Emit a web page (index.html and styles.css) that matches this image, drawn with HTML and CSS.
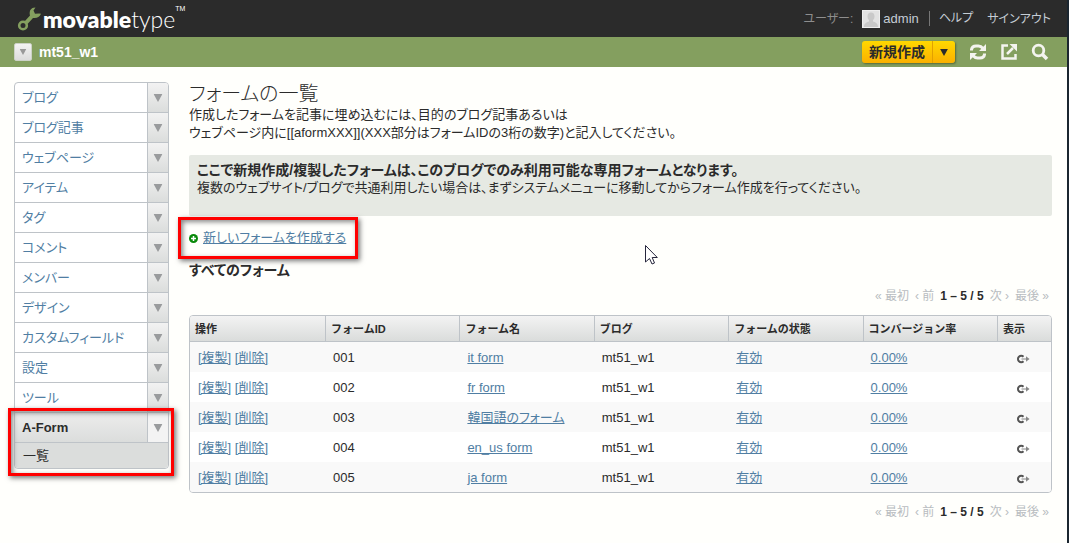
FILE: index.html
```html
<!DOCTYPE html>
<html lang="ja">
<head>
<meta charset="utf-8">
<title>フォームの一覧 | Movable Type</title>
<link rel="stylesheet" href="styles.css">
</head>
<body>
<svg class="defs" width="0" height="0" aria-hidden="true">
  <symbol id="down" viewBox="0 0 10 9"><path d="M0 0H10L5 9Z"/></symbol>
  <symbol id="view" viewBox="0 0 14 10"><path d="M7.500 2.800A3.200 3.200 0 1 0 7.500 7.200" fill="none" stroke="#555" stroke-width="2"/><path d="M5.500 5H10" fill="none" stroke="#888" stroke-width="1.200"/><path d="M10 2.200L13.500 5L10 7.800Z" fill="#888"/></symbol>
</svg>
<header class="brandbar">
  <a class="logo" href="#">
    <svg class="wrench" viewBox="0 0 24 24" aria-hidden="true"><circle cx="6" cy="18.500" r="3.800" fill="none" stroke="#849f5f" stroke-width="2.600"/><path d="M7.500 14.500L13 8.500C12 4.500 13.500 1.500 16.500 .8L18.500 .5L16.500 3.500L18 6.800L22 6.500L24 6.800C22.500 10.500 19.500 11.500 16 11L10.500 17Z" fill="#849f5f"/></svg>
    <span class="wordmark"><b>movable</b>type</span><sup>TM</sup>
  </a>
  <nav class="account">
    <span class="muted">ユーザー:</span>
    <a class="user" href="#"><svg class="avatar" viewBox="0 0 18 18" aria-hidden="true"><path d="M0 0H18V18H0Z" fill="#eee"/><path d="M1 1H17V17H1Z" fill="#e2e2e2"/><ellipse cx="9" cy="6.500" rx="3.500" ry="4" fill="#c9c9c9"/><path d="M2 17C2 13 5 12 7 11.500V9H11V11.500C13 12 16 13 16 17Z" fill="#c9c9c9"/></svg>admin</a>
    <a class="help" href="#">ヘルプ</a>
    <a class="signout" href="#">サインアウト</a>
  </nav>
</header>
<div class="blogbar">
  <button class="switch" type="button" aria-label="ブログの切り替え"><svg viewBox="0 0 10 9"><use href="#down"/></svg></button>
  <a class="blogname" href="#">mt51_w1</a>
  <div class="create"><button type="button">新規作成</button><button class="more" type="button" aria-label="作成メニュー"><svg viewBox="0 0 10 9"><use href="#down"/></svg></button></div>
  <a class="tool" href="#" aria-label="再構築"><svg viewBox="0 0 18 18"><path d="M2.500 7.500V6.500Q3 3 7 3H9.500Q12 3 14 5.500M15.500 10.500V11.500Q15 15 11 15H8.500Q6 15 4 12.500" fill="none" stroke="#f4f4ef" stroke-width="3"/><path d="M17 1V8H10ZM1 17V10H8Z" fill="#f4f4ef"/></svg></a>
  <a class="tool" href="#" aria-label="サイトの表示"><svg viewBox="0 0 18 18"><path d="M8 2.500H2.500V15.500H15.500V11M7 11L13 5" fill="none" stroke="#f4f4ef" stroke-width="2.500"/><path d="M9.500 1H17V8.500Z" fill="#f4f4ef"/></svg></a>
  <a class="tool" href="#" aria-label="検索"><svg viewBox="0 0 18 18"><circle cx="7.500" cy="7.500" r="5.300" fill="none" stroke="#f4f4ef" stroke-width="2.800"/><path d="M11 11L16 16" stroke="#f4f4ef" stroke-width="3.500"/></svg></a>
</div>
<div class="layout">
  <nav class="menu">
    <div class="item"><a href="#">ブログ</a><button type="button" aria-label="ブログを開く"><svg viewBox="0 0 10 9"><use href="#down"/></svg></button></div>
    <div class="item"><a href="#">ブログ記事</a><button type="button" aria-label="ブログ記事を開く"><svg viewBox="0 0 10 9"><use href="#down"/></svg></button></div>
    <div class="item"><a href="#">ウェブページ</a><button type="button" aria-label="ウェブページを開く"><svg viewBox="0 0 10 9"><use href="#down"/></svg></button></div>
    <div class="item"><a href="#">アイテム</a><button type="button" aria-label="アイテムを開く"><svg viewBox="0 0 10 9"><use href="#down"/></svg></button></div>
    <div class="item"><a href="#">タグ</a><button type="button" aria-label="タグを開く"><svg viewBox="0 0 10 9"><use href="#down"/></svg></button></div>
    <div class="item"><a href="#">コメント</a><button type="button" aria-label="コメントを開く"><svg viewBox="0 0 10 9"><use href="#down"/></svg></button></div>
    <div class="item"><a href="#">メンバー</a><button type="button" aria-label="メンバーを開く"><svg viewBox="0 0 10 9"><use href="#down"/></svg></button></div>
    <div class="item"><a href="#">デザイン</a><button type="button" aria-label="デザインを開く"><svg viewBox="0 0 10 9"><use href="#down"/></svg></button></div>
    <div class="item"><a href="#">カスタムフィールド</a><button type="button" aria-label="カスタムフィールドを開く"><svg viewBox="0 0 10 9"><use href="#down"/></svg></button></div>
    <div class="item"><a href="#">設定</a><button type="button" aria-label="設定を開く"><svg viewBox="0 0 10 9"><use href="#down"/></svg></button></div>
    <div class="item"><a href="#">ツール</a><button type="button" aria-label="ツールを開く"><svg viewBox="0 0 10 9"><use href="#down"/></svg></button></div>
    <div class="group">
      <div class="item current"><a href="#">A-Form</a><button type="button" aria-label="A-Formを閉じる"><svg viewBox="0 0 10 9"><use href="#down"/></svg></button></div>
      <a class="sub" href="#">一覧</a>
      <span class="mark mark-menu"></span>
    </div>
  </nav>
  <main class="content">
    <h1>フォームの一覧</h1>
    <p class="lead">作成したフォームを記事に埋め込むには、目的のブログ記事あるいは<br>ウェブページ内に[[aformXXX]](XXX部分はフォームIDの3桁の数字)と記入してください。</p>
    <div class="notice"><strong>ここで新規作成/複製したフォームは、このブログでのみ利用可能な専用フォームとなります。</strong><p>複数のウェブサイト/ブログで共通利用したい場合は、まずシステムメニューに移動してからフォーム作成を行ってください。</p></div>
    <div class="new">
      <svg class="plus" viewBox="0 0 9 9" aria-hidden="true"><circle cx="4.500" cy="4.500" r="4.500" fill="#0a8a0a"/><path d="M4.500 2V7M2 4.500H7" stroke="#fff" stroke-width="1.500"/></svg>
      <a href="#">新しいフォームを作成する</a>
      <span class="mark mark-new"></span>
    </div>
    <h2>すべてのフォーム</h2>
    <div class="pager"><span>« 最初</span><span>‹ 前</span><b>1 – 5 / 5</b><span>次 ›</span><span>最後 »</span></div>
    <div class="frame">
      <table>
        <colgroup><col class="first"><col><col><col><col><col><col class="last"></colgroup>
        <thead><tr><th>操作</th><th>フォームID</th><th>フォーム名</th><th>ブログ</th><th>フォームの状態</th><th>コンバージョン率</th><th>表示</th></tr></thead>
        <tbody>
          <tr><td><a href="#">[複製]</a> <a href="#">[削除]</a></td><td>001</td><td><a href="#">it form</a></td><td>mt51_w1</td><td><a href="#">有効</a></td><td><a href="#">0.00%</a></td><td class="show"><a href="#" aria-label="表示"><svg viewBox="0 0 14 10"><use href="#view"/></svg></a></td></tr>
          <tr><td><a href="#">[複製]</a> <a href="#">[削除]</a></td><td>002</td><td><a href="#">fr form</a></td><td>mt51_w1</td><td><a href="#">有効</a></td><td><a href="#">0.00%</a></td><td class="show"><a href="#" aria-label="表示"><svg viewBox="0 0 14 10"><use href="#view"/></svg></a></td></tr>
          <tr><td><a href="#">[複製]</a> <a href="#">[削除]</a></td><td>003</td><td><a href="#">韓国語のフォーム</a></td><td>mt51_w1</td><td><a href="#">有効</a></td><td><a href="#">0.00%</a></td><td class="show"><a href="#" aria-label="表示"><svg viewBox="0 0 14 10"><use href="#view"/></svg></a></td></tr>
          <tr><td><a href="#">[複製]</a> <a href="#">[削除]</a></td><td>004</td><td><a href="#">en_us form</a></td><td>mt51_w1</td><td><a href="#">有効</a></td><td><a href="#">0.00%</a></td><td class="show"><a href="#" aria-label="表示"><svg viewBox="0 0 14 10"><use href="#view"/></svg></a></td></tr>
          <tr><td><a href="#">[複製]</a> <a href="#">[削除]</a></td><td>005</td><td><a href="#">ja form</a></td><td>mt51_w1</td><td><a href="#">有効</a></td><td><a href="#">0.00%</a></td><td class="show"><a href="#" aria-label="表示"><svg viewBox="0 0 14 10"><use href="#view"/></svg></a></td></tr>
        </tbody>
      </table>
    </div>
    <div class="pager pager-bottom"><span>« 最初</span><span>‹ 前</span><b>1 – 5 / 5</b><span>次 ›</span><span>最後 »</span></div>
  </main>
</div>
<svg class="pointer" viewBox="0 0 13 20" aria-hidden="true"><path d="M.5 .5V17L4.500 13.500L7 19L9.500 18L7.200 12.500H12.300Z" fill="#fff" stroke="#26263c"/></svg>
</body>
</html>
```
FILE: styles.css
```css
* { box-sizing: border-box; }
body {
  position: relative;
  margin: 0;
  min-height: 100vh;
  overflow: hidden;
  border-right: 2px solid #1b2630;
  background: #fffffc;
  color: #2b2b2b;
  font: 13px/18px "Liberation Sans", "Noto Sans CJK JP", sans-serif;
  font-feature-settings: "palt";
}
a { color: #507ea3; }
button { margin: 0; padding: 0; border: 0; font: inherit; color: inherit; cursor: pointer; }
svg { display: block; }
.defs { position: absolute; }

.brandbar {
  display: flex;
  justify-content: space-between;
  align-items: center;
  height: 37px;
  padding: 0 16px 0 17px;
  background: #2b2b2b;
}
.logo { display: flex; align-items: center; color: #fff; text-decoration: none; }
.wrench { width: 24px; height: 24px; }
.wordmark { margin-left: 2px; font: 300 23px/28px Lato, sans-serif; }
.wordmark b { font-weight: 800; }
.logo sup { align-self: flex-start; font: 7px/8px "Liberation Sans", sans-serif; }
.account { display: flex; align-items: center; font-size: 12px; }
.account a { color: #c5cdd5; text-decoration: none; }
.muted { margin-right: 9px; color: #8e8e8e; }
.account .user { display: flex; align-items: center; gap: 3px; font-size: 13px; }
.avatar { width: 18px; height: 18px; }
.help { margin: 0 14px 0 10px; padding-left: 9px; border-left: 1px solid #777; line-height: 15px; }

.blogbar {
  display: flex;
  align-items: center;
  height: 30px;
  padding: 0 15px 0 14px;
  background: #849f5f;
  color: #fff;
}
.switch {
  display: grid;
  place-items: center;
  width: 18px;
  height: 18px;
  border: 1px solid #ccd2c6;
  border-radius: 2px;
  background: linear-gradient(#f3f3f3, #dcdcdc);
}
.switch svg { width: 8px; height: 6px; fill: #999; }
.blogname { flex: 1; margin-left: 7px; color: #fff; font-size: 14px; font-weight: bold; text-decoration: none; }
.create {
  display: flex;
  height: 22px;
  margin-right: 4px;
  border-radius: 3px;
  background: linear-gradient(#ffd800, #fbb000);
  box-shadow: 1px 1px 2px #566a3b;
  color: #2b2b2b;
}
.create button { padding: 0 7px; background: none; font-size: 14px; font-weight: bold; line-height: 22px; }
.create .more { display: grid; place-items: center; width: 23px; border-left: 1px solid #e2a000; }
.create svg { width: 8px; height: 7px; fill: #2b2b2b; }
.tool { margin-left: 7px; padding: 3px; }
.tool svg { width: 18px; height: 18px; }

.layout { display: flex; gap: 20px; padding: 15px 15px 0 14px; }
.menu {
  flex: none;
  align-self: flex-start;
  width: 155px;
  border: 1px solid #bec3c8;
  border-radius: 4px;
  background: #fff;
}
.item { display: flex; height: 30px; border-bottom: 1px solid #bec3c8; }
.item a { flex: 1; padding: 0 7px; line-height: 29px; text-decoration: none; }
.item button {
  display: grid;
  place-items: center;
  width: 21px;
  border-left: 1px solid #bec3c8;
  background: linear-gradient(#f2f2f2, #dbdddc);
}
.item:first-child button { border-top-right-radius: 3px; }
.item svg { width: 10px; height: 8px; fill: #999b9d; }
.current { background: linear-gradient(#ececec, #dbdddc); }
.current a { color: #2b2b2b; font-weight: bold; }
.item.current button { border-radius: 0; background: #f3f3f3; }
.group { position: relative; }
.sub {
  display: block;
  padding: 0 8px;
  border-radius: 0 0 4px 4px;
  background: #dbdddc;
  color: #2b2b2b;
  line-height: 25px;
  text-decoration: none;
}
.mark {
  position: absolute;
  border: 3px solid #f00;
  box-shadow: 2px 2px 5px #777, inset 2px 2px 5px #888;
  pointer-events: none;
}
.mark-menu { inset: -5px -6px -8px -7px; }
.mark-new { inset: -12px -12px -12px -11px; }

.content { flex: 1; min-width: 0; }
h1 { margin: 0; font-size: 20px; font-weight: 300; line-height: 24px; }
.lead { margin: 0; }
.notice {
  min-height: 61px;
  margin-top: 13px;
  padding: 6px 8px;
  border-radius: 2px;
  background: #e6e9e3;
}
.notice p { margin: 0; }
.notice strong { display: block; font-size: 14px; }
.new { position: relative; display: flex; align-items: center; gap: 5px; width: max-content; margin-top: 13px; }
.plus { width: 9px; height: 9px; }
h2 { margin: 14px 0 0; font-size: 14px; line-height: 18px; }
.pager {
  display: flex;
  justify-content: flex-end;
  gap: 6px;
  margin-top: 8px;
  padding-right: 3px;
  color: #b8bcc0;
  font-size: 12px;
}
.pager b { color: #2b2b2b; }
.pager-bottom { margin-top: 10px; }
.frame {
  margin-top: 10px;
  overflow: hidden;
  border: 1px solid #bec3c8;
  border-radius: 4px;
}
table { width: 100%; border-spacing: 0; table-layout: fixed; }
.first { width: 135px; }
.last { width: 54px; }
th {
  height: 26px;
  padding: 0 5px;
  border-left: 1px solid #bec3c8;
  border-bottom: 1px solid #bec3c8;
  background: linear-gradient(#f3f3f3, #dadcdb);
  font-size: 11px;
  font-feature-settings: normal;
  line-height: 16px;
  text-align: left;
  white-space: nowrap;
}
th:first-child { border-left: 0; }
td { height: 30px; padding: 2px 8px 0; background: #fff; white-space: nowrap; }
tr:nth-child(odd) td { background: #f9f9f9; }
td.show { padding: 4px 0 0 19px; }
.show svg { width: 14px; height: 10px; }
.pointer { position: absolute; left: 645px; top: 245px; width: 13px; height: 20px; }
```
